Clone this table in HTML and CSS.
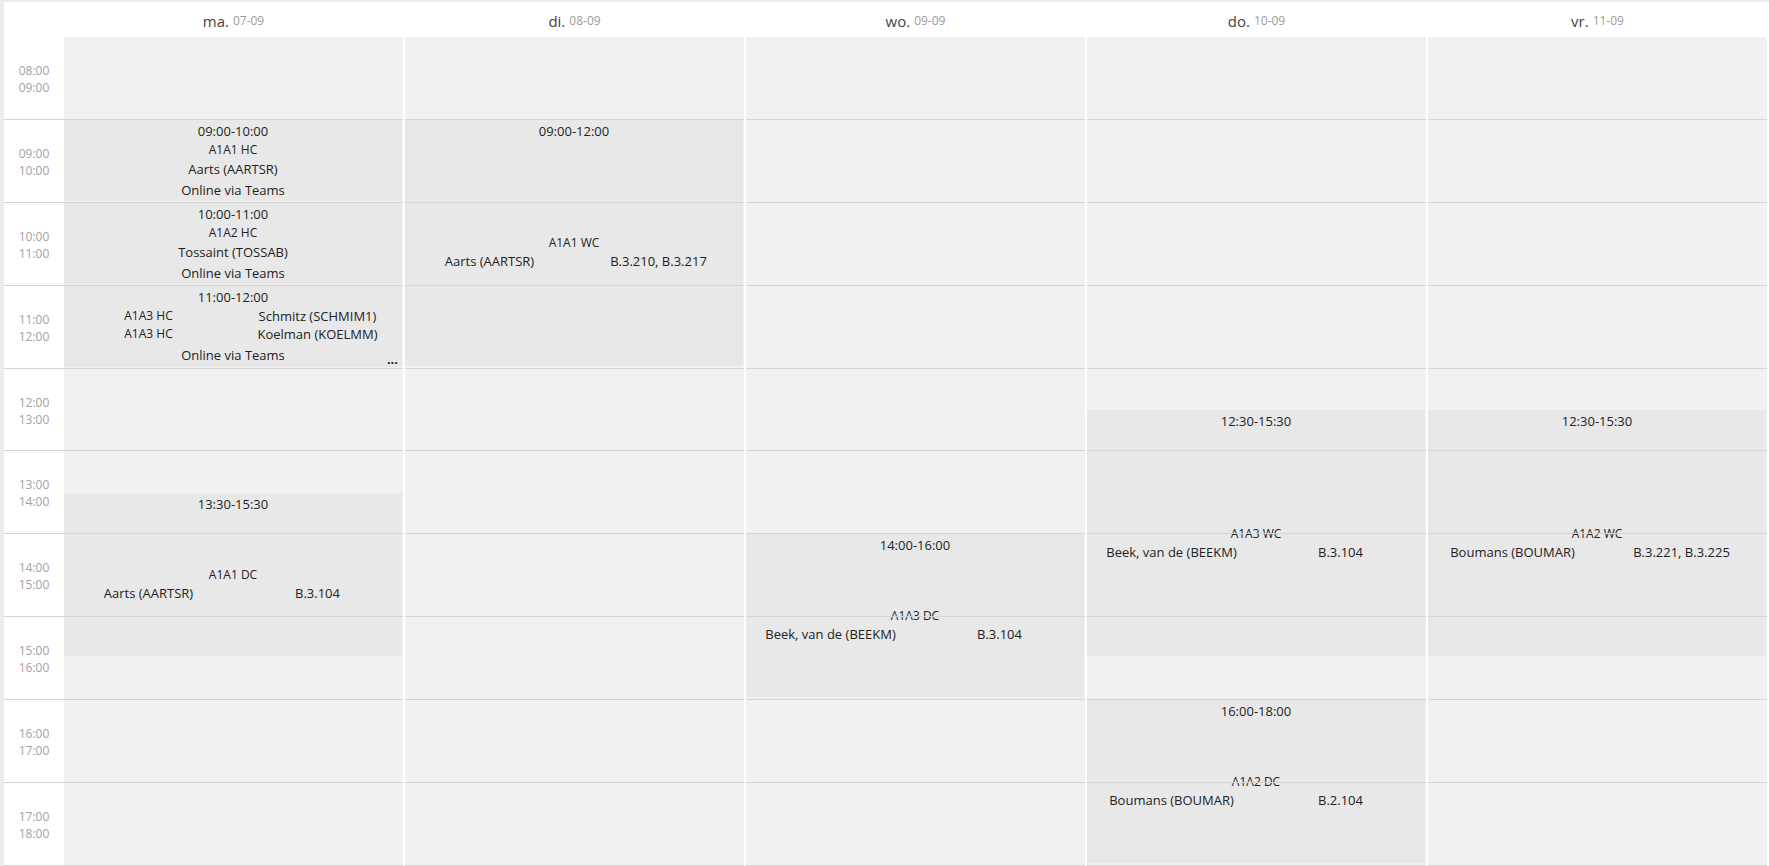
FILE: index.html
```html
<!DOCTYPE html>
<html lang="nl">
<head>
<meta charset="utf-8">
<title>Rooster</title>
<link rel="stylesheet" href="styles.css">
</head>
<body>
<div class="schedule">
  <div class="corner"></div>
  <div class="day-head"><span class="dname">ma.</span> <span class="ddate">07-09</span></div>
  <div class="day-head"><span class="dname">di.</span> <span class="ddate">08-09</span></div>
  <div class="day-head"><span class="dname">wo.</span> <span class="ddate">09-09</span></div>
  <div class="day-head"><span class="dname">do.</span> <span class="ddate">10-09</span></div>
  <div class="day-head"><span class="dname">vr.</span> <span class="ddate">11-09</span></div>

  <div class="times">
    <div class="tcell"><span>08:00</span><span>09:00</span></div>
    <div class="tcell"><span>09:00</span><span>10:00</span></div>
    <div class="tcell"><span>10:00</span><span>11:00</span></div>
    <div class="tcell"><span>11:00</span><span>12:00</span></div>
    <div class="tcell"><span>12:00</span><span>13:00</span></div>
    <div class="tcell"><span>13:00</span><span>14:00</span></div>
    <div class="tcell"><span>14:00</span><span>15:00</span></div>
    <div class="tcell"><span>15:00</span><span>16:00</span></div>
    <div class="tcell"><span>16:00</span><span>17:00</span></div>
    <div class="tcell"><span>17:00</span><span>18:00</span></div>
  </div>

  <!-- maandag -->
  <div class="day">
    <div class="event" style="top:82.9px;height:81px">
      <div class="ev-time">09:00-10:00</div>
      <div class="ev-body">
        <div class="ev-class">A1A1 HC</div>
        <div class="ev-line">Aarts (AARTSR)</div>
        <div class="ev-online">Online via Teams</div>
      </div>
    </div>
    <div class="event" style="top:165.8px;height:81px">
      <div class="ev-time">10:00-11:00</div>
      <div class="ev-body">
        <div class="ev-class">A1A2 HC</div>
        <div class="ev-line">Tossaint (TOSSAB)</div>
        <div class="ev-online">Online via Teams</div>
      </div>
    </div>
    <div class="event" style="top:248.7px;height:81px">
      <div class="ev-time">11:00-12:00</div>
      <div class="ev-body">
        <div class="ev-table">
          <span class="ev-class">A1A3 HC</span><span>Schmitz (SCHMIM1)</span>
          <span class="ev-class">A1A3 HC</span><span>Koelman (KOELMM)</span>
        </div>
        <div class="ev-online">Online via Teams</div>
      </div>
      <span class="ev-more">...</span>
    </div>
    <div class="event" style="top:455.95px;height:163px">
      <div class="ev-time">13:30-15:30</div>
      <div class="ev-body">
        <div class="ev-class">A1A1 DC</div>
        <div class="ev-table"><span>Aarts (AARTSR)</span><span>B.3.104</span></div>
      </div>
    </div>
    <div class="hour"></div><div class="hour"></div><div class="hour"></div><div class="hour"></div><div class="hour"></div>
    <div class="hour"></div><div class="hour"></div><div class="hour"></div><div class="hour"></div><div class="hour"></div>
  </div>

  <!-- dinsdag -->
  <div class="day">
    <div class="event" style="top:82.9px;height:246px">
      <div class="ev-time">09:00-12:00</div>
      <div class="ev-body">
        <div class="ev-class">A1A1 WC</div>
        <div class="ev-table"><span>Aarts (AARTSR)</span><span>B.3.210, B.3.217</span></div>
      </div>
    </div>
    <div class="hour"></div><div class="hour"></div><div class="hour"></div><div class="hour"></div><div class="hour"></div>
    <div class="hour"></div><div class="hour"></div><div class="hour"></div><div class="hour"></div><div class="hour"></div>
  </div>

  <!-- woensdag -->
  <div class="day">
    <div class="event" style="top:497.4px;height:163px">
      <div class="ev-time">14:00-16:00</div>
      <div class="ev-body">
        <div class="ev-class">A1A3 DC</div>
        <div class="ev-table"><span>Beek, van de (BEEKM)</span><span>B.3.104</span></div>
      </div>
    </div>
    <div class="hour"></div><div class="hour"></div><div class="hour"></div><div class="hour"></div><div class="hour"></div>
    <div class="hour"></div><div class="hour"></div><div class="hour"></div><div class="hour"></div><div class="hour"></div>
  </div>

  <!-- donderdag -->
  <div class="day">
    <div class="event" style="top:373.05px;height:246px">
      <div class="ev-time">12:30-15:30</div>
      <div class="ev-body">
        <div class="ev-class">A1A3 WC</div>
        <div class="ev-table"><span>Beek, van de (BEEKM)</span><span>B.3.104</span></div>
      </div>
    </div>
    <div class="event" style="top:663.2px;height:163px">
      <div class="ev-time">16:00-18:00</div>
      <div class="ev-body">
        <div class="ev-class">A1A2 DC</div>
        <div class="ev-table"><span>Boumans (BOUMAR)</span><span>B.2.104</span></div>
      </div>
    </div>
    <div class="hour"></div><div class="hour"></div><div class="hour"></div><div class="hour"></div><div class="hour"></div>
    <div class="hour"></div><div class="hour"></div><div class="hour"></div><div class="hour"></div><div class="hour"></div>
  </div>

  <!-- vrijdag -->
  <div class="day">
    <div class="event" style="top:373.05px;height:246px">
      <div class="ev-time">12:30-15:30</div>
      <div class="ev-body">
        <div class="ev-class">A1A2 WC</div>
        <div class="ev-table"><span>Boumans (BOUMAR)</span><span>B.3.221, B.3.225</span></div>
      </div>
    </div>
    <div class="hour"></div><div class="hour"></div><div class="hour"></div><div class="hour"></div><div class="hour"></div>
    <div class="hour"></div><div class="hour"></div><div class="hour"></div><div class="hour"></div><div class="hour"></div>
  </div>
</div>
</body>
</html>
```
FILE: styles.css
```css
html, body {
  margin: 0;
  padding: 0;
  height: 100%;
  overflow: hidden;
  background: #ececec;
}

body {
  padding: 2px 0 0 4px;
  box-sizing: border-box;
  font-family: "Open Sans", "Noto Sans", "Liberation Sans", sans-serif;
  color: #222;
}

.schedule {
  display: grid;
  grid-template-columns: 58px repeat(5, 339px);
  grid-template-rows: 35px auto;
  column-gap: 2px;
  background: #fff;
  padding-right: 2px;
  height: 864px;
}

.corner {
  background: #fff;
  margin-right: -2px;
}

.day-head {
  display: flex;
  align-items: center;
  justify-content: center;
  gap: 4px;
  padding-top: 2px;
  box-sizing: border-box;
  background: #fff;
}

.dname {
  font-size: 15px;
  color: #444;
}

.ddate {
  font-size: 12px;
  color: #9b9b9b;
}

.times {
  margin-right: -2px;
  background: #fff;
}

.tcell {
  height: 82.9px;
  box-sizing: border-box;
  border-bottom: 1px solid #d4d4d4;
  display: flex;
  flex-direction: column;
  align-items: center;
  justify-content: center;
  font-size: 12px;
  line-height: 17px;
  color: #a2a2a2;
  padding-top: 2px;
}

.day {
  position: relative;
  background: #f1f1f1;
}

.hour {
  position: relative;
  height: 82.9px;
  box-sizing: border-box;
  border-bottom: 1px solid #d4d4d4;
}

.event {
  position: absolute;
  left: 0;
  right: 1px;
  background: #e8e8e8;
  display: flex;
  flex-direction: column;
  padding: 1px 0 2px;
  box-sizing: border-box;
}

.ev-time {
  font-size: 13px;
  line-height: 20px;
  text-align: center;
}

.ev-body {
  flex: 1;
  display: flex;
  flex-direction: column;
  justify-content: center;
  text-align: center;
  font-size: 13px;
  line-height: 18px;
}

.ev-class {
  font-size: 12px;
  line-height: 18px;
}

.ev-line {
  margin-top: 1px;
}

.ev-table {
  display: grid;
  grid-template-columns: 1fr 1fr;
  text-align: center;
}

.ev-online {
  margin-top: 3px;
}

.ev-more {
  position: absolute;
  right: 4px;
  bottom: 2px;
  font-size: 13px;
  font-weight: 700;
  line-height: 12px;
}
```
